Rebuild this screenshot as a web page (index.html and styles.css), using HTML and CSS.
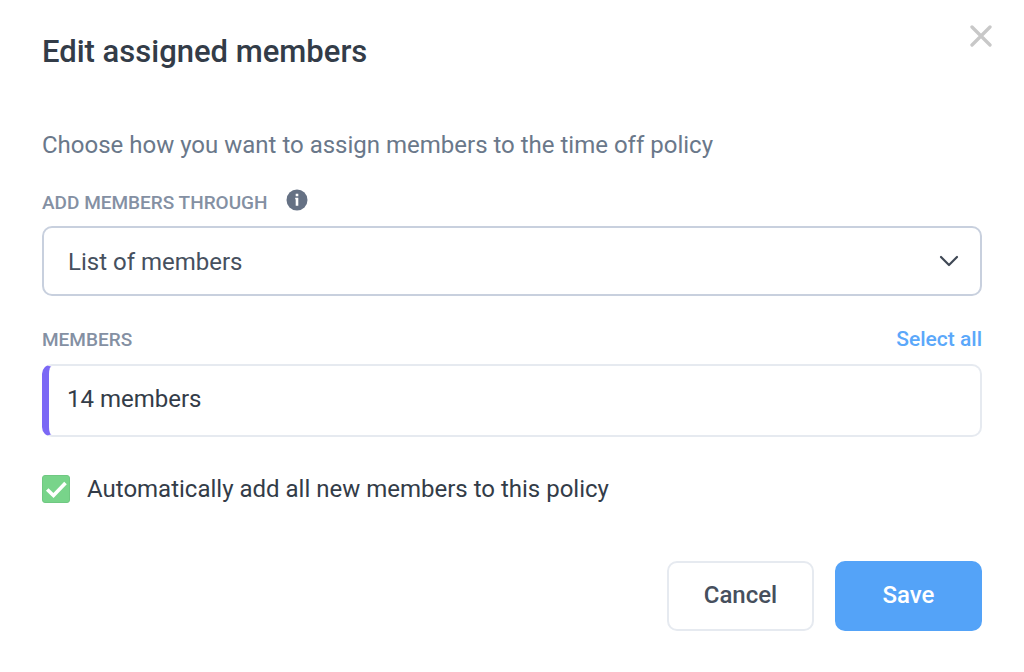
FILE: index.html
```html
<!DOCTYPE html>
<html lang="en">
<head>
<meta charset="utf-8">
<title>Edit assigned members</title>
<link rel="stylesheet" href="styles.css">
</head>
<body>
<form class="dialog">
  <header class="header">
    <h1 class="title">Edit assigned members</h1>
    <button class="close" type="button" aria-label="Close">
      <svg width="22" height="22" viewBox="0 0 22 22"><path d="M2 2l18 18M20 2L2 20" fill="none" stroke="currentColor" stroke-width="3.300" stroke-linecap="round"/></svg>
    </button>
  </header>
  <p class="intro">Choose how you want to assign members to the time off policy</p>
  <div class="label-row">
    <label class="label" for="through">Add members through</label>
    <svg class="info" width="22" height="22" viewBox="0 0 22 22"><circle cx="11" cy="11" r="10.500" fill="currentColor"/><path d="M9.700 4.800h2.600v2.400H9.700zM9.200 8.800h3.100v8H9.700v-6.600h-.5z" fill="#fff"/></svg>
  </div>
  <div class="select-wrap">
    <select class="select" id="through"><option>List of members</option></select>
    <svg class="chevron" width="20" height="12" viewBox="0 0 20 12"><path d="M2 2l8 8 8-8" fill="none" stroke="currentColor" stroke-width="2.200" stroke-linecap="round" stroke-linejoin="round"/></svg>
  </div>
  <div class="label-row members-row">
    <label class="label" for="members">Members</label>
    <a class="select-all" href="#">Select all</a>
  </div>
  <input class="members" id="members" type="text" value="14 members">
  <div class="auto">
    <span class="check-wrap">
      <input class="check" id="auto" type="checkbox" checked>
      <svg class="tick" width="28" height="28" viewBox="0 0 28 28"><path d="M5.200 14.500l6.300 6L23.500 8" fill="none" stroke="#fff" stroke-width="3.600"/></svg>
    </span>
    <label for="auto">Automatically add all new members to this policy</label>
  </div>
  <footer class="footer">
    <button class="button" type="button">Cancel</button>
    <button class="button primary" type="submit">Save</button>
  </footer>
</form>
</body>
</html>
```
FILE: styles.css
```css
* { box-sizing: border-box; }
body { margin: 0; background: #fff; color: #333c48; font: 24px/32px Roboto, sans-serif; }
.dialog { padding: 24px 42px 40px; }
.header { display: flex; justify-content: space-between; align-items: flex-start; margin-right: -10px; }
.title { margin: 8px 0 0; font-size: 31px; line-height: 40px; font-weight: 500; }
.close { display: flex; margin: 0; padding: 1px 0 0; border: 0; background: none; color: #c8c8c8; }
.intro { margin: 57px 0 0; color: #6a788a; }
.label-row { display: flex; align-items: center; height: 24px; margin-top: 30px; }
.label { color: #8490a3; font-size: 19px; line-height: 24px; font-weight: 500; text-transform: uppercase; }
.info { margin: 0 0 6px 18px; color: #657184; }
.select-wrap { display: grid; align-items: center; margin-top: 11px; }
.select, .chevron { grid-area: 1 / 1; }
.select { appearance: none; width: 100%; height: 70px; padding: 2px 24px 0; border: 2px solid #c8d0de; border-radius: 10px; background: #fff; color: #46505e; font: inherit; }
.chevron { justify-self: end; margin-right: 23px; color: #3f4855; pointer-events: none; }
.members-row { justify-content: space-between; margin-top: 32px; }
.select-all { padding-bottom: 2px; color: #5ba8fa; font-size: 21px; line-height: 24px; font-weight: 500; text-decoration: none; }
.members { display: block; width: 100%; height: 73px; margin-top: 12px; padding: 0 24px 4px 18px; border: 2px solid #e6eaf0; border-left: 7px solid #7b68f5; border-radius: 10px; background: #fff; color: inherit; font: inherit; }
.auto { display: flex; align-items: center; gap: 17px; margin-top: 36px; }
.check-wrap { display: grid; }
.check, .tick { grid-area: 1 / 1; }
.check { appearance: none; width: 28px; height: 28px; margin: 0; border: 1px solid #70c882; border-radius: 3px; background: #78d48a; }
.tick { pointer-events: none; }
.footer { display: flex; justify-content: flex-end; gap: 21px; margin-top: 56px; }
.button { width: 147px; height: 70px; padding: 0 0 2px; border: 2px solid #e6eaf0; border-radius: 10px; background: #fff; color: #464f5d; font: inherit; font-weight: 500; }
.primary { border-color: #54a3f8; background: #54a3f8; color: #fff; }
```
